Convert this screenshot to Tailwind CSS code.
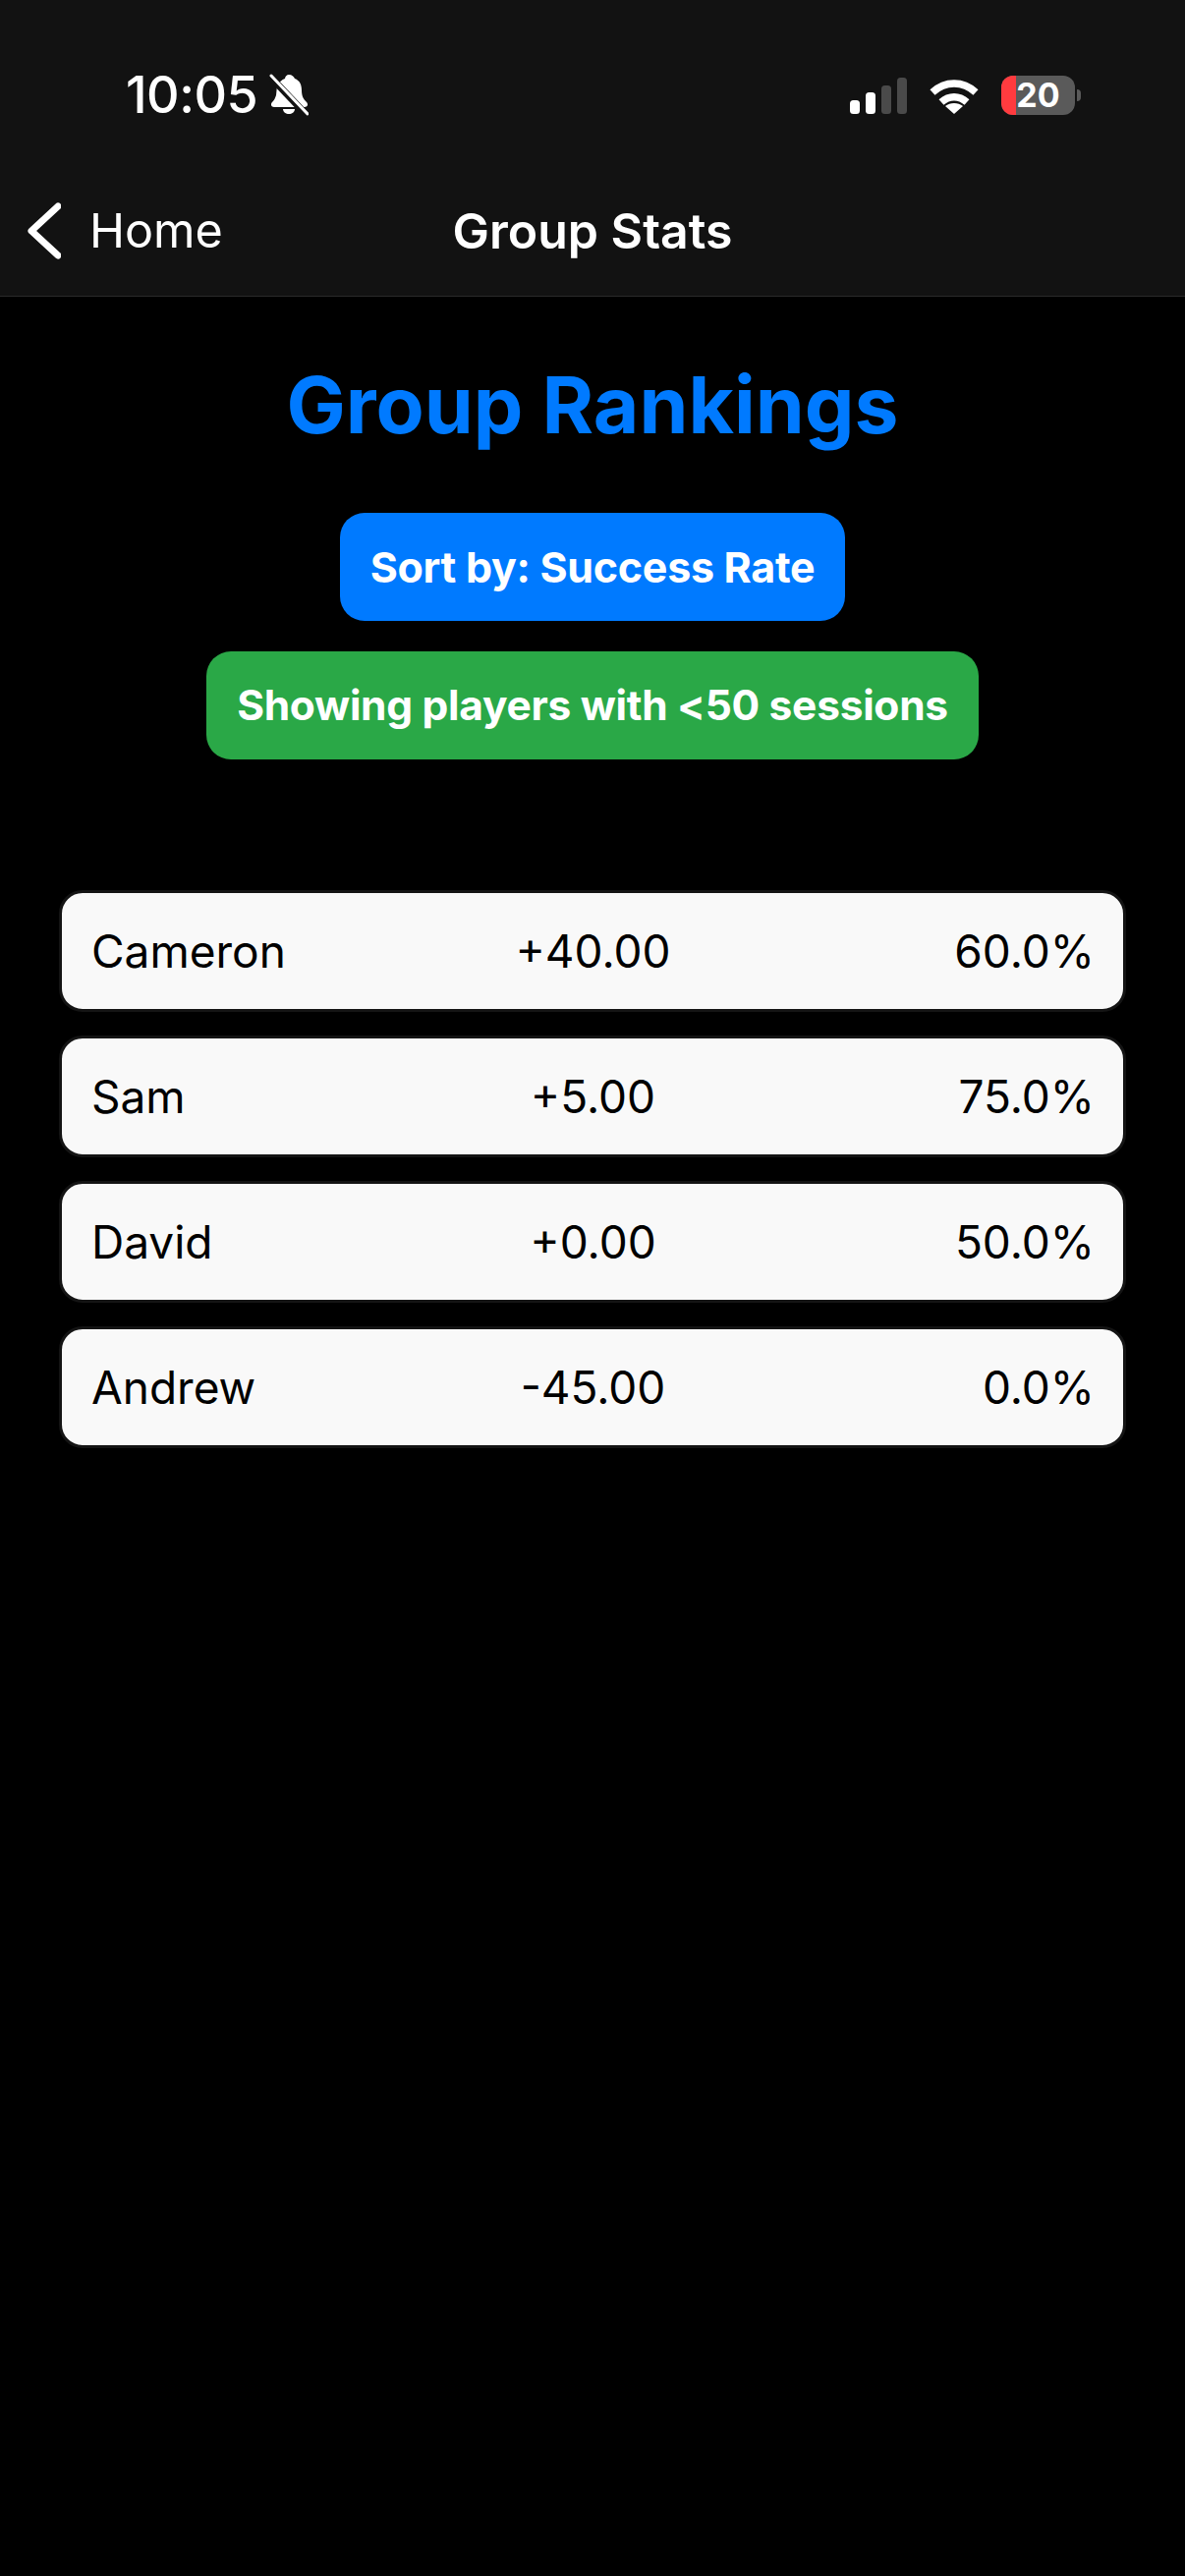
<!DOCTYPE html>
<html lang="en">
  <head>
    <meta charset="UTF-8" />
    <meta name="viewport" content="width=device-width, initial-scale=1" />
    <title>Group Stats</title>
    <script src="https://cdn.jsdelivr.net/npm/@tailwindcss/browser@4"></script>
  </head>
  <body class="bg-black min-h-screen font-['Inter',sans-serif]">
    <header class="bg-[#121212] h-[302px] border-b border-[#2a2a2a] flex flex-col">
      <!-- Status bar -->
      <div class="h-[210px] pt-[69px] pl-[128px] pr-[106px] flex items-start justify-between text-white">
        <div class="flex items-center gap-[12px]">
          <span class="text-[52px] leading-[56px] font-medium tracking-[-0.5px]">10:05</span>
          <svg class="w-[40px] h-[44px]" viewBox="0 0 40 44" fill="#fff">
            <path d="M20 1c3 0 5 2 6 4 5 2 7 6 7 12 0 6 2 9 5 12 2 2 1 5-2 5H5c-3 0-4-3-2-5 2-2 3-4 4-7L8 12c2-3 5-6 8-7 0-2 2-4 4-4z" />
            <path d="M14 36h12c0 3-3 5-6 5s-6-2-6-5z" />
            <path d="M1 3 38 42" stroke="#121212" stroke-width="7" />
            <path d="M2 2 39 41" stroke="#fff" stroke-width="3" stroke-linecap="round" />
          </svg>
        </div>
        <div class="flex items-center gap-[23px] h-[56px]">
          <svg class="w-[58px] h-[37px]" viewBox="0 0 58 37">
            <rect x="0" y="23" width="10" height="14" rx="3.5" fill="#fff" />
            <rect x="16" y="15" width="10" height="22" rx="3.5" fill="#fff" />
            <rect x="32" y="8" width="10" height="29" rx="3.5" fill="#4a4a4a" />
            <rect x="48" y="0" width="10" height="37" rx="3.5" fill="#4a4a4a" />
          </svg>
          <svg class="w-[50px] h-[37px]" viewBox="0 0 50 37" fill="none" stroke="#fff">
            <path d="M3 15C16 3 34 3 47 15" stroke-width="7.5" />
            <path d="M12 25C20 18 30 18 38 25" stroke-width="7.5" />
            <path d="M25 37 16 29C21 25 29 25 34 29Z" fill="#fff" stroke="none" />
          </svg>
          <div class="flex items-center gap-[2px]">
            <div class="relative w-[75px] h-[40px] rounded-[12px] bg-[#5a5a5a] overflow-hidden flex items-center justify-center">
              <div class="absolute left-0 top-0 bottom-0 w-[15px] bg-[#ff3b3f]"></div>
              <span class="relative text-[34px] leading-none font-bold text-white">20</span>
            </div>
            <div class="w-[4px] h-[12px] rounded-r-full bg-[#5a5a5a]"></div>
          </div>
        </div>
      </div>
      <!-- Nav bar -->
      <div class="relative flex-1 flex items-start pl-[28px]">
        <div class="flex items-center h-[50px] gap-[29px]">
          <svg class="w-[34px] h-[58px]" viewBox="0 0 34 58" fill="none" stroke="#fff" stroke-width="7" stroke-linecap="round" stroke-linejoin="round">
            <path d="M31 4 4 29 31 54" />
          </svg>
          <span class="text-[48.5px] leading-[50px] text-white">Home</span>
        </div>
        <div class="absolute left-0 right-0 top-0 text-center text-[50px] leading-[50px] font-semibold text-white">Group Stats</div>
      </div>
    </header>

    <main class="px-[60px]">
      <h1 class="mt-[64px] text-center text-[80.3px] leading-[92px] font-bold text-[#007aff]">Group Rankings</h1>

      <div class="mt-[64px] flex flex-col items-center gap-[31px]">
        <div class="h-[110px] w-[514px] flex items-center justify-center rounded-[25px] bg-[#007aff] text-white text-[43px] font-bold tracking-[-0.3px]">Sort by: Success Rate</div>
        <div class="h-[110px] w-[786px] flex items-center justify-center rounded-[25px] bg-[#2aa847] text-white text-[42.5px] font-bold tracking-[-0.3px]">Showing players with &lt;50 sessions</div>
      </div>

      <div class="mt-[133px] flex flex-col gap-[24px]">
        <div class="h-[124px] pl-[30px] pr-[29px] grid grid-cols-3 items-center rounded-[24px] bg-[#f9f9f9] border-[3px] border-[#141414] text-black text-[46px]">
          <span>Cameron</span><span class="text-center">+40.00</span><span class="text-right">60.0%</span>
        </div>
        <div class="h-[124px] pl-[30px] pr-[29px] grid grid-cols-3 items-center rounded-[24px] bg-[#f9f9f9] border-[3px] border-[#141414] text-black text-[46px]">
          <span>Sam</span><span class="text-center">+5.00</span><span class="text-right">75.0%</span>
        </div>
        <div class="h-[124px] pl-[30px] pr-[29px] grid grid-cols-3 items-center rounded-[24px] bg-[#f9f9f9] border-[3px] border-[#141414] text-black text-[46px]">
          <span>David</span><span class="text-center">+0.00</span><span class="text-right">50.0%</span>
        </div>
        <div class="h-[124px] pl-[30px] pr-[29px] grid grid-cols-3 items-center rounded-[24px] bg-[#f9f9f9] border-[3px] border-[#141414] text-black text-[46px]">
          <span>Andrew</span><span class="text-center">-45.00</span><span class="text-right">0.0%</span>
        </div>
      </div>
    </main>
  </body>
</html>
